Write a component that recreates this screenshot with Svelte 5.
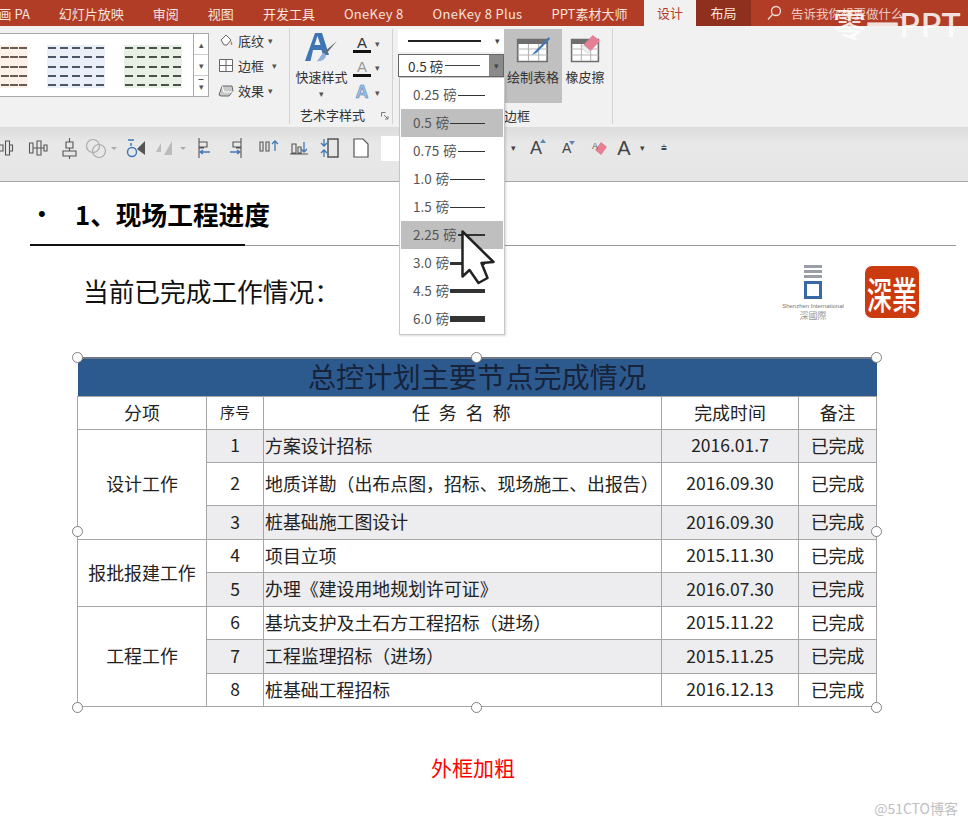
<script>
  const tabs = ["画 PA", "幻灯片放映", "审阅", "视图", "开发工具", "OneKey 8", "OneKey 8 Plus", "PPT素材大师"];

  // 线条粗细下拉项
  const weights = [
    { label: "0.25 磅", h: 1 },
    { label: "0.5 磅", h: 1, sel: true },
    { label: "0.75 磅", h: 1 },
    { label: "1.0 磅", h: 1 },
    { label: "1.5 磅", h: 1 },
    { label: "2.25 磅", h: 2, sel: true },
    { label: "3.0 磅", h: 3 },
    { label: "4.5 磅", h: 4 },
    { label: "6.0 磅", h: 6 },
  ];

  const swatches = [
    { tint: "#fdf1e8", ink: "#6b5a50", cols: 3, width: 28 },
    { tint: "#e9eef7", ink: "#4c5563", cols: 5, width: 58 },
    { tint: "#e8f0e6", ink: "#46524a", cols: 5, width: 58 },
  ];

  const rows = [
    { group: "设计工作", span: 3, no: 1, task: "方案设计招标", date: "2016.01.7", shade: true, h: 33 },
    { no: 2, task: "地质详勘（出布点图，招标、现场施工、出报告）", date: "2016.09.30", h: 43 },
    { no: 3, task: "桩基础施工图设计", date: "2016.09.30", shade: true, h: 34 },
    { group: "报批报建工作", span: 2, no: 4, task: "项目立项", date: "2015.11.30", h: 33 },
    { no: 5, task: "办理《建设用地规划许可证》", date: "2016.07.30", shade: true, h: 34 },
    { group: "工程工作", span: 3, no: 6, task: "基坑支护及土石方工程招标（进场）", date: "2015.11.22", h: 33 },
    { no: 7, task: "工程监理招标（进场）", date: "2015.11.25", shade: true, h: 34 },
    { no: 8, task: "桩基础工程招标", date: "2016.12.13", h: 33 },
  ];

  // 选中框控制点
  const handles = [
    [0, 0], [399, 0], [799, 0],
    [0, 174], [799, 174],
    [0, 350], [399, 350], [799, 350],
  ];
</script>

<div class="page">
  <div class="tabbar">
    {#each tabs as t}
      <span class="tab" class:latin={t.startsWith("OneKey")}>{t}</span>
    {/each}
    <span class="tab-active">设计</span>
    <span class="tab-dark">布局</span>
    <svg class="search" width="16" height="16" viewBox="0 0 16 16"><circle cx="10" cy="6" r="4.5" fill="none" stroke="#f3ddd7" stroke-width="1.3"/><path d="M6.6 9.4 2 14.5" stroke="#f3ddd7" stroke-width="1.4"/></svg>
    <span class="tell">告诉我你想要做什么</span>
  </div>

  <div class="ribbon">
    <div class="gallery-wrap">
      <div class="gallery">
        {#each swatches as s}
          <div class="swatch" style="background:{s.tint};width:{s.width}px">
            {#each [0, 1, 2, 3, 4] as r}
              <div class="dash-row">
                {#each Array(s.cols) as _}
                  <i style="background:{s.ink}"></i>
                {/each}
              </div>
            {/each}
          </div>
        {/each}
      </div>
      <div class="scroller">
        <span>▴</span><span>▾</span><span class="expand">▾</span>
      </div>
    </div>

    <div class="fill-list">
      <div class="fill-item">
        <svg width="16" height="15" viewBox="0 0 16 15"><path d="M3 7 8 2l5 5-4 5H6z" fill="#fff" stroke="#666"/><path d="M13 8c1 1.500 2 3 1 4-1 .5-2-1-1-4z" fill="#c08a3a"/></svg>
        <span>底纹</span><b>▾</b>
      </div>
      <div class="fill-item">
        <svg width="16" height="15" viewBox="0 0 16 15"><path d="M1.500 1.500h13v12h-13zM8 1.500v12M1.500 7.500h13" fill="#fff" stroke="#666"/></svg>
        <span>边框</span><b class="far">▾</b>
      </div>
      <div class="fill-item">
        <svg width="16" height="15" viewBox="0 0 16 15"><path d="M1 12 4 3h10l1 5-4 5H3z" fill="#c9c9c9" stroke="#666"/><path d="M4 3 6 9h9" fill="none" stroke="#fff"/></svg>
        <span>效果</span><b>▾</b>
      </div>
    </div>

    <div class="sep"></div>

    <div class="wordart">
      <div class="wa-top">
        <div class="quick">
          <svg width="36" height="34" viewBox="0 0 36 34">
            <path d="M1 29 11 1h7l7 22h-6l-1.500-5H9l-2.500 11zM10.500 13h6L13.500 4z" fill="#3f74b5" fill-rule="evenodd"/>
            <path d="M33 9 22 22l-2-2z" fill="#6b6b6b"/>
            <path d="M20 21c-3 1-4 5-7 8 4 1 9-2 9-6z" fill="#8fb1d9"/>
          </svg>
          <span>快速样式</span>
          <b>▾</b>
        </div>
        <div class="wa-small">
          <div class="wa-row"><div class="a-under">A<i></i></div><b>▾</b></div>
          <div class="wa-row"><div class="a-under light">A<i></i></div><b>▾</b></div>
          <div class="wa-row"><div class="a-glow">A</div><b>▾</b></div>
        </div>
      </div>
      <div class="group-label">艺术字样式<svg class="launch" width="8" height="8" viewBox="0 0 8 8"><path d="M.5 .5h4M.5 .5v4M3 3l4 4M7 4v3H4" fill="none" stroke="#777"/></svg></div>
    </div>

    <div class="sep"></div>

    <div class="borders">
      <div class="borders-top">
        <div class="combos">
          <div class="combo plain"><i class="pen-line"></i><b>▾</b></div>
          <div class="combo active">
            <span>0.5 磅</span><i class="thin-line"></i><em><b>▾</b></em>
          </div>
        </div>
        <div class="big-btn on">
          <svg width="34" height="30" viewBox="0 0 30 30" preserveAspectRatio="none">
            <path d="M1.500 5.500h26v22h-26z" fill="#fff" stroke="#6e6e6e" stroke-width="1.500"/>
            <path d="M1 5h27v5H1z" fill="#6e6e6e"/>
            <path d="M1.500 15h26M1.500 21h26M11 10v17M20 10v17" stroke="#b5b5b5"/>
            <path d="M29 3 17 17l-3 4 4-2L30 5z" fill="#3f78b8"/>
          </svg>
          <span>绘制表格</span>
        </div>
        <div class="big-btn">
          <svg width="31" height="30" viewBox="0 0 30 30" preserveAspectRatio="none">
            <path d="M1.500 5.500h26v22h-26z" fill="#fff" stroke="#6e6e6e" stroke-width="1.500"/>
            <path d="M1 5h27v5H1z" fill="#6e6e6e"/>
            <path d="M1.500 15h26M1.500 21h26M11 10v17M20 10v17" stroke="#b5b5b5"/>
            <path d="M22 1l7 6-9 10-7-6z" fill="#e57f93"/>
            <path d="M13 11l7 6-3 2-6-5z" fill="#f1f1f1" stroke="#bbb" stroke-width=".5"/>
          </svg>
          <span>橡皮擦</span>
        </div>
      </div>
      <div class="group-label border-label">边框</div>
    </div>

    <div class="sep"></div>
  </div>

  <div class="toolbar">
    <svg class="tools-left" width="372" height="22" viewBox="0 0 372 22">
      <g fill="none" stroke="#555" stroke-width="1.100">
        <path d="M0 8h3v6H0M5.500 4h4v14h-4zM9.500 8h3v6h-3"/>
        <path d="M29.500 6h3.500v10h-3.500zM37 4h4v14h-4zM44 8h3v6h-3zM33 11h11"/>
        <path d="M66 5h7v6h-7zM63 14h13v5H63zM69.500 1v4M69.500 11v3M69.500 19v3"/>
      </g>
      <g fill="none" stroke="#aaa" stroke-width="1.200">
        <circle cx="93" cy="9" r="6.500"/><circle cx="99" cy="14" r="6.500"/>
      </g>
      <path d="M111 10h6l-3 3z" fill="#aaa"/>
      <g>
        <circle cx="132" cy="15" r="4.500" fill="none" stroke="#3f78b8" stroke-width="1.400"/>
        <path d="M128 3h6M131 6v3" stroke="#3f78b8" stroke-width="1.500"/>
        <path d="M145 4v14l-8-6z" fill="#555"/>
      </g>
      <g fill="#bbb"><path d="M156 15l5-9v9zM172 4v14h-8z"/></g>
      <path d="M180 10h6l-3 3z" fill="#aaa"/>
      <g fill="none" stroke="#555" stroke-width="1.100">
        <path d="M199 1v20M199 5h8v5h-8zM199 11h5"/>
        <path d="M241 1v20M241 5h-8v5h8zM241 11h-5"/>
        <path d="M260 5h3v9h-3zM266 5h3v9h-3z"/>
        <path d="M290 17h18M292 7h4v9h-4zM298 10h3v6h-3z"/>
        <path d="M328 2h10v18h-10z" stroke-width="1.500"/>
      </g>
      <g fill="none" stroke="#3f78b8" stroke-width="1.300">
        <path d="M201 15h9M203 13l-3 2 3 2"/>
        <path d="M239 15h-9M237 13l3 2-3 2"/>
        <path d="M275 5v9M272 7l3-3 3 3"/>
        <path d="M304 5v9M301 12l3 3 3-3"/>
        <path d="M324 2v7M321 6l3 3 3-3M324 20v-7M321 16l3-3 3 3"/>
      </g>
      <path d="M354 2h9l5 5v13h-14z" fill="#fff" stroke="#555" stroke-width="1.200"/>
    </svg>
    <div class="font-input"></div>
    <div class="tools-right">
      <b class="mini">▾</b>
      <span class="grow-a">A<i class="up"></i></span>
      <span class="shrink-a">A<i class="down"></i></span>
      <svg class="erase-a" width="18" height="18" viewBox="0 0 18 18"><path d="M10 3l6 5-6 8-6-5z" fill="#e57f93"/><text x="1" y="10" font-size="9" fill="#666" font-family="Liberation Sans">A</text></svg>
      <span class="clear-a">A</span>
      <b class="mini m-last">▾</b>
      <b class="more">⩧</b>
    </div>
  </div>

  <div class="slide">
    <div class="title-row"><span class="dot">•</span><h1>1、现场工程进度</h1></div>
    <div class="rule"><i></i></div>

    <div class="sub-row">
      <h2>当前已完成工作情况：</h2>
      <div class="logo">
        <div class="bars"><i></i><i></i><i></i></div>
        <div class="ring"></div>
        <small>Shenzhen International</small>
        <small class="cn">深國際</small>
      </div>
      <div class="seal"><span>深</span><span>業</span></div>
    </div>

    <div class="table-wrap">
      <table>
        <colgroup>
          <col style="width:129px" /><col style="width:57px" /><col style="width:398px" /><col style="width:137px" /><col style="width:78px" />
        </colgroup>
        <thead>
          <tr class="banner"><th colspan="5">总控计划主要节点完成情况</th></tr>
          <tr class="heads">
            <th>分项</th>
            <th class="small-head">序号</th>
            <th class="spaced">任 务 名 称</th>
            <th>完成时间</th>
            <th>备注</th>
          </tr>
        </thead>
        <tbody>
          {#each rows as r}
            <tr class:shade={r.shade} style="height:{r.h}px">
              {#if r.group}
                <td class="group" rowspan={r.span}>{r.group}</td>
              {/if}
              <td class="c num">{r.no}</td>
              <td class="task">{r.task}</td>
              <td class="c num">{r.date}</td>
              <td class="c">已完成</td>
            </tr>
          {/each}
        </tbody>
      </table>
      {#each handles as [x, y]}
        <i class="handle" style="left:{x}px;top:{y}px"></i>
      {/each}
    </div>

    <p class="note">外框加粗</p>
  </div>

  <!-- 线条粗细下拉 -->
  <div class="dropdown">
    {#each weights as w}
      <div class="opt" class:sel={w.sel}>
        <span>{w.label}</span>
        <i style="height:{w.h}px"></i>
      </div>
    {/each}
  </div>

  <svg class="cursor" width="34" height="56" viewBox="0 0 34 56">
    <path d="M1.500 1.500v45l7-6.500 9 13 9-5-6-15 12-1z" fill="#fff" stroke="#222" stroke-width="2.500" stroke-linejoin="round"/>
  </svg>

  <div class="mark">零一PPT</div>
  <div class="blog">@51CTO博客</div>
</div>

<style>
  :global(body) {
    margin: 0;
    background: #fff;
  }

  .page {
    position: relative;
    width: 968px;
    height: 827px;
    overflow: hidden;
    background: #fff;
    font-family: "Noto Sans CJK SC", "Liberation Sans", sans-serif;
    color: #333;
  }

  /* 顶部选项卡 */
  .tabbar {
    height: 26px;
    background: #b23d27;
    display: flex;
    align-items: center;
    margin-left: -16px;
    font-size: 13px;
    color: #f5e3de;
  }

  .tab {
    padding: 0 14.5px;
    white-space: nowrap;
  }

  .latin {
    letter-spacing: 0.3px;
  }

  .tab-active {
    margin-left: 2px;
    width: 52px;
    height: 26px;
    line-height: 26px;
    text-align: center;
    background: #f1f1f1;
    color: #b23d27;
  }

  .tab-dark {
    width: 55px;
    height: 26px;
    line-height: 26px;
    text-align: center;
    background: #8f2f1d;
  }

  .search {
    margin-left: 15px;
  }

  .tell {
    margin-left: 9px;
    font-size: 12.500px;
    color: #eec9c0;
  }

  /* 功能区 */
  .ribbon {
    height: 101px;
    background: #f1f1f1;
    display: flex;
    box-sizing: border-box;
  }

  .gallery-wrap {
    width: 209px;
    height: 64px;
    margin-top: 7px;
    display: flex;
    flex: none;
    box-sizing: border-box;
    background: #fff;
    border: 1px solid #a8a8a8;
    border-left: none;
  }

  .gallery {
    flex: 1;
    display: flex;
    gap: 19px;
    padding-top: 11px;
  }

  .swatch {
    height: 43px;
    display: flex;
    flex-direction: column;
    justify-content: space-between;
    padding: 2px 0;
    box-sizing: border-box;
  }

  .dash-row {
    display: flex;
    justify-content: space-between;
    padding: 0 1px;
  }

  .dash-row i {
    width: 8px;
    height: 2px;
  }

  .scroller {
    width: 14px;
    display: flex;
    flex-direction: column;
    border-left: 1px solid #a8a8a8;
    font-size: 9px;
    color: #555;
  }

  .scroller span {
    flex: 1;
    display: flex;
    align-items: center;
    justify-content: center;
    border-bottom: 1px solid #ccc;
  }

  .scroller .expand {
    border: none;
    text-decoration: overline;
  }

  .fill-list {
    width: 80px;
    flex: none;
    padding: 2px 0 0 9px;
    box-sizing: border-box;
  }

  .fill-item {
    height: 25px;
    display: flex;
    align-items: center;
    gap: 4px;
    font-size: 13px;
    white-space: nowrap;
  }

  .fill-item b {
    font-size: 9px;
    font-weight: normal;
    color: #555;
  }

  .fill-item .far {
    margin-left: 4px;
  }

  .sep {
    width: 1px;
    height: 95px;
    margin-top: 3px;
    background: #d2d2d2;
    flex: none;
  }

  .wordart {
    width: 102px;
    flex: none;
    box-sizing: border-box;
  }

  .wa-top {
    display: flex;
    height: 79px;
    padding-top: 6px;
    box-sizing: border-box;
  }

  .quick {
    width: 63px;
    display: flex;
    flex-direction: column;
    align-items: center;
    box-sizing: border-box;
    font-size: 13px;
    white-space: nowrap;
  }

  .quick span {
    margin-top: 1px;
    line-height: 20px;
  }

  .quick b,
  .wa-row b {
    font-size: 9px;
    font-weight: normal;
    color: #555;
  }

  .wa-small {
    display: flex;
    flex-direction: column;
  }

  .wa-row {
    height: 24.500px;
    display: flex;
    align-items: center;
    gap: 4px;
    font-family: "Liberation Sans", sans-serif;
  }

  .a-under {
    width: 18px;
    text-align: center;
    font-size: 15px;
    line-height: 14px;
    color: #333;
  }

  .a-under i {
    display: block;
    height: 3px;
    background: #111;
  }

  .a-under.light {
    color: #999;
  }

  .a-glow {
    width: 18px;
    text-align: center;
    font-size: 18px;
    font-weight: bold;
    color: #9cc0e8;
    -webkit-text-stroke: 0.5px #4a79b0;
  }

  .group-label {
    position: relative;
    font-size: 13px;
    line-height: 20px;
    padding-left: 10px;
    white-space: nowrap;
  }

  .launch {
    position: absolute;
    left: 91px;
    top: 7px;
  }

  .borders {
    width: 219px;
    flex: none;
  }

  .borders-top {
    display: flex;
    height: 77px;
    padding-left: 5px;
    padding-top: 3px;
  }

  .combos {
    width: 106px;
    flex: none;
    display: flex;
    flex-direction: column;
    gap: 2px;
    font-size: 13.500px;
  }

  .combo {
    height: 23px;
    display: flex;
    align-items: center;
    background: #fff;
    box-sizing: border-box;
    position: relative;
  }

  .combo b {
    font-size: 9px;
    font-weight: normal;
    color: #444;
  }

  .plain {
    padding: 0 4px 0 10px;
    justify-content: space-between;
  }

  .pen-line {
    width: 73px;
    height: 2px;
    background: #222;
  }

  .active {
    border: 1px solid #666;
    padding-left: 9px;
  }

  .thin-line {
    width: 35px;
    height: 1px;
    background: #444;
    margin-left: 2px;
  }

  .active em {
    position: absolute;
    right: 0;
    top: 0;
    bottom: 0;
    width: 14px;
    background: #8a8a8a;
    display: flex;
    align-items: center;
    justify-content: center;
    font-style: normal;
  }

  .big-btn {
    width: 58px;
    height: 74px;
    flex: none;
    display: flex;
    flex-direction: column;
    align-items: center;
    padding-top: 5px;
    box-sizing: border-box;
    font-size: 13px;
    white-space: nowrap;
    gap: 3px;
  }

  .big-btn + .big-btn {
    width: 40px;
    margin-left: 3px;
  }

  .big-btn.on {
    background: #c0c0c0;
  }

  .border-label {
    padding-left: 111px;
  }

  /* 快速访问工具条 */
  .toolbar {
    height: 55px;
    box-sizing: border-box;
    padding-top: 9px;
    display: flex;
    align-items: flex-start;
    background: linear-gradient(#dcdcdc, #e8e8e8 30%, #e6e6e6);
    border-bottom: 1px solid #a9a9a9;
  }

  .tools-left {
    margin-right: 9px;
    flex: none;
    margin-top: 1px;
  }

  .font-input {
    width: 30px;
    height: 25px;
    background: #fff;
    flex: none;
  }

  .tools-right {
    margin-left: 100px;
    height: 24px;
    display: flex;
    align-items: center;
    font-family: "Liberation Sans", sans-serif;
    color: #444;
  }

  .mini {
    font-size: 9px;
    font-weight: normal;
  }

  .grow-a,
  .shrink-a {
    position: relative;
  }

  .grow-a {
    font-size: 18px;
    margin-left: 14px;
  }

  .shrink-a {
    font-size: 14px;
    margin-left: 20px;
  }

  .up,
  .down {
    position: absolute;
    right: -4px;
    top: 1px;
    border-left: 3px solid transparent;
    border-right: 3px solid transparent;
  }

  .up {
    border-bottom: 4px solid #5b87b8;
  }

  .down {
    border-top: 4px solid #5b87b8;
  }

  .erase-a {
    margin-left: 20px;
  }

  .clear-a {
    font-size: 20px;
    margin-left: 8px;
  }

  .m-last {
    margin-left: 9px;
  }

  .more {
    font-size: 10px;
    font-weight: normal;
    margin-left: 16px;
  }

  /* 幻灯片内容 */
  .slide {
    padding-top: 15px;
    color: #000;
  }

  .title-row {
    display: flex;
    align-items: center;
    height: 34px;
    padding-left: 38px;
  }

  .dot {
    width: 37px;
    font-size: 22px;
    font-family: "Liberation Sans", sans-serif;
  }

  h1 {
    margin: 0;
    font-size: 25.700px;
    font-weight: 700;
    line-height: 34px;
  }

  .rule {
    margin: 14px 12px 0 30px;
    height: 1px;
    background: #9a9a9a;
    position: relative;
  }

  .rule i {
    position: absolute;
    left: 0;
    top: -1px;
    width: 215px;
    height: 2px;
    background: #111;
  }

  .sub-row {
    height: 111px;
    display: flex;
    align-items: flex-start;
    padding-left: 83px;
  }

  h2 {
    margin: 26px 0 0;
    width: 701px;
    font-size: 25.700px;
    font-weight: 400;
    line-height: 38px;
    white-space: nowrap;
    color: #111;
  }

  .logo {
    width: 62px;
    margin-left: -2px;
    margin-top: 19px;
    display: flex;
    flex-direction: column;
    align-items: center;
  }

  .bars {
    width: 18px;
    display: flex;
    flex-direction: column;
    gap: 2px;
    margin-bottom: 3px;
  }

  .bars i {
    height: 3px;
    background: #9a9ea6;
  }

  .ring {
    width: 18px;
    height: 18px;
    box-sizing: border-box;
    border: 3.500px solid #3a6aa5;
  }

  .logo small {
    font-family: "Liberation Sans", sans-serif;
    font-size: 6px;
    color: #777;
    white-space: nowrap;
    line-height: 8px;
    margin-top: 3px;
  }

  .logo .cn {
    font-family: "Noto Sans CJK TC", sans-serif;
    font-size: 9px;
    line-height: 11px;
    margin-top: 0;
    color: #999;
  }

  .seal {
    width: 54px;
    height: 52px;
    margin-left: 21px;
    margin-top: 20px;
    background: #cc3a0f;
    border-radius: 7px;
    display: flex;
    align-items: center;
    justify-content: center;
    font-family: "Noto Sans CJK TC", sans-serif;
    font-size: 25px;
    font-weight: 500;
    color: #fff;
  }

  .seal span {
    transform: scaleY(1.5);
  }

  .table-wrap {
    position: relative;
    width: 799px;
    margin-left: 77px;
  }

  table {
    width: 799px;
    table-layout: fixed;
    border-collapse: collapse;
    font-size: 17.900px;
    color: #222;
  }

  .banner th {
    height: 38px;
    padding: 0 0 2px;
    line-height: 34px;
    background: #2d5a8e;
    border-top: 2px solid #6f7780;
    font-size: 28.200px;
    font-weight: 400;
    color: #16233a;
    box-sizing: border-box;
  }

  .heads th {
    height: 33px;
    padding: 0 0 2px;
    box-sizing: border-box;
    font-weight: 400;
    border: 1px solid #a6a6a6;
  }

  .heads .small-head {
    font-size: 15px;
  }

  .heads .spaced {
    letter-spacing: 2.500px;
  }

  td {
    padding: 0 0 2px;
    border: 1px solid #a6a6a6;
    white-space: nowrap;
  }

  .group,
  .c {
    text-align: center;
  }

  .num {
    font-size: 17.500px;
  }

  .task {
    padding-left: 1px;
  }

  .shade td:not(.group) {
    background: #edecee;
  }

  .handle {
    position: absolute;
    width: 11px;
    height: 11px;
    margin: -5px 0 0 -5px;
    box-sizing: border-box;
    background: #fff;
    border: 1.500px solid #808080;
    border-radius: 50%;
  }

  .note {
    margin: 46px 0 0;
    width: 946px;
    text-align: center;
    font-size: 21px;
    line-height: 28px;
    color: #f00;
  }

  /* 覆盖层 */
  .dropdown {
    position: absolute;
    left: 399px;
    top: 77px;
    width: 106px;
    height: 258px;
    padding: 3px 1px;
    box-sizing: border-box;
    background: #fff;
    border: 1px solid #c6c6c6;
    box-shadow: 1px 1px 2px rgba(0, 0, 0, 0.15);
  }

  .opt {
    height: 28px;
    display: flex;
    align-items: center;
    padding: 0 18px 0 12px;
    font-size: 13.500px;
    word-spacing: 1px;
    color: #555;
    white-space: nowrap;
  }

  .opt span {
    margin-top: -2px;
  }

  .opt i {
    flex: 1;
    margin-left: 1px;
    background: #333;
  }

  .opt.sel {
    background: #bfbfbf;
  }

  .cursor {
    position: absolute;
    left: 461px;
    top: 230px;
  }

  .mark {
    position: absolute;
    left: 833px;
    top: 1px;
    font-size: 33px;
    font-weight: 500;
    line-height: 44px;
    color: rgba(255, 255, 255, 0.85);
    white-space: nowrap;
  }

  .blog {
    position: absolute;
    right: 10px;
    bottom: 9px;
    font-size: 14px;
    color: #c0c0c0;
  }
</style>
